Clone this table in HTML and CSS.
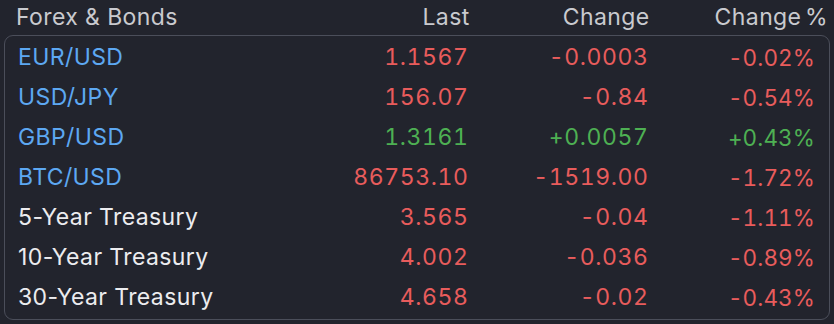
FILE: index.html
```html
<!DOCTYPE html>
<html>
<head>
<meta charset="utf-8">
<link rel="stylesheet" href="styles.css">
</head>
<body>
<div class="panel">
  <div class="row head">
    <div class="name">Forex &amp; Bonds</div>
    <div class="num">Last</div>
    <div class="num">Change</div>
    <div class="num hpct">Change %</div>
  </div>
  <div class="box">
    <div class="row"><div class="name fx">EUR/USD</div><div class="num dn">1.1567</div><div class="num dn">-0.0003</div><div class="num pct dn">-0.02%</div></div>
    <div class="row"><div class="name fx">USD/JPY</div><div class="num dn">156.07</div><div class="num dn">-0.84</div><div class="num pct dn">-0.54%</div></div>
    <div class="row"><div class="name fx">GBP/USD</div><div class="num up">1.3161</div><div class="num up">+0.0057</div><div class="num pct up">+0.43%</div></div>
    <div class="row"><div class="name fx">BTC/USD</div><div class="num dn">86753.10</div><div class="num dn">-1519.00</div><div class="num pct dn">-1.72%</div></div>
    <div class="row"><div class="name">5-Year Treasury</div><div class="num dn">3.565</div><div class="num dn">-0.04</div><div class="num pct dn">-1.11%</div></div>
    <div class="row"><div class="name">10-Year Treasury</div><div class="num dn">4.002</div><div class="num dn">-0.036</div><div class="num pct dn">-0.89%</div></div>
    <div class="row"><div class="name">30-Year Treasury</div><div class="num dn">4.658</div><div class="num dn">-0.02</div><div class="num pct dn">-0.43%</div></div>
  </div>
</div>
</body>
</html>
```
FILE: styles.css
```css
html, body {
  margin: 0;
  padding: 0;
  background: #22242d;
}
body {
  width: 834px;
  height: 324px;
  overflow: hidden;
  font-family: Inter, "Noto Sans", sans-serif;
  font-size: 23px;
  letter-spacing: 0.4px;
  color: #ececef;
}
.panel {
  padding: 0 4px 0 4px;
}
.row {
  display: grid;
  grid-template-columns: 1fr 160px 180px 167px;
  height: 40px;
  align-items: center;
  padding: 0 14px 0 13px;
}
.head {
  height: 33px;
  padding: 0 14px 0 12px;
  color: #c9cacf;
}
.box {
  margin-top: 2px;
  border: 1.5px solid #4b4e5a;
  border-radius: 9px;
  padding: 1px 0 2px 0;
}
.num {
  text-align: right;
  font-variant-numeric: tabular-nums;
  letter-spacing: 0.6px;
  margin-right: -0.6px;
}
.head .num {
  letter-spacing: 0.4px;
}
.hpct {
  margin-right: -12px;
  word-spacing: -3px;
}
.pct {
  font-size: 22.5px;
  letter-spacing: 0.1px;
  margin-right: 0;
}
.fx { color: #5da8f2; }
.dn { color: #e85c5c; }
.up { color: #4eb053; }
```
